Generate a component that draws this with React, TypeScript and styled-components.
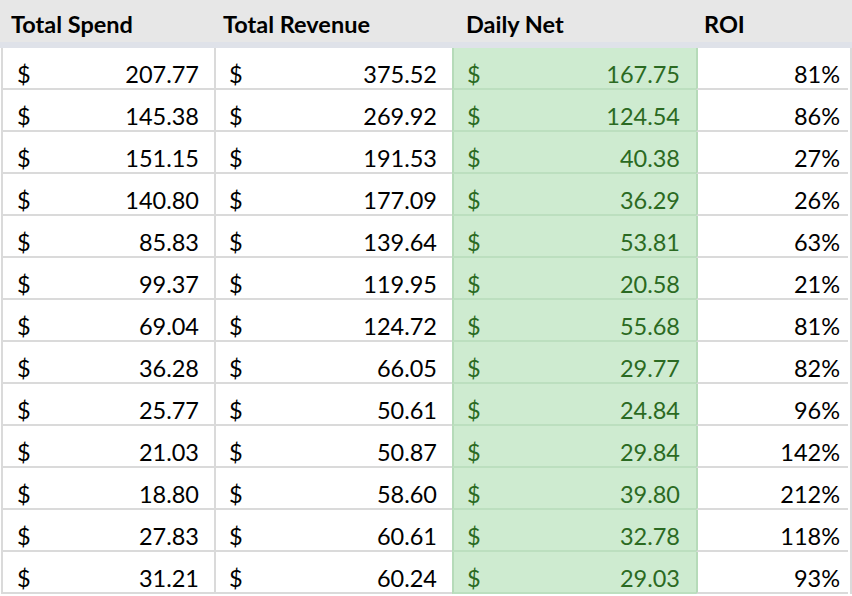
import * as React from 'react'
import styled, { createGlobalStyle } from 'styled-components'

const GlobalStyle = createGlobalStyle`
    html, body {
        margin: 0;
        padding: 0;
        background: #ffffff;
    }
    body {
        font-family: Lato, "Open Sans", "Liberation Sans", sans-serif;
        color: #000000;
        overflow: hidden;
    }
`

const COLS = '213px 238px 244px 152px'

const Sheet = styled.div`
    width: 852px;
    height: 596px;
    overflow: hidden;
    background: #ffffff;
`

const HeaderRow = styled.div`
    display: grid;
    grid-template-columns: ${COLS};
    height: 42px;
    padding-left: 1px;
    background: #e7e7e7;
    border-bottom: 6px solid #dfe2e9;
    box-sizing: content-box;
`

const HeaderCell = styled.div<{ $pad: number }>`
    padding-top: 10px;
    padding-left: ${p => p.$pad}px;
    font-size: 23.5px;
    line-height: 28px;
    font-weight: 700;
    white-space: nowrap;
`

const Body = styled.div`
    padding-left: 1px;
    width: 849px;
    border-right: 2px solid #dadada;
`

const Row = styled.div`
    display: grid;
    grid-template-columns: ${COLS};
`

const Cell = styled.div<{ $green?: boolean; $afterGreen?: boolean; $right?: number; $left?: number }>`
    display: flex;
    justify-content: ${p => (p.$left === undefined ? 'flex-end' : 'space-between')};
    height: 40px;
    box-sizing: border-box;
    padding-top: 12px;
    padding-left: ${p => p.$left ?? 0}px;
    padding-right: ${p => p.$right ?? 15}px;
    font-size: 23.5px;
    line-height: 28px;
    white-space: nowrap;
    background: ${p => (p.$green ? '#ceebd0' : '#ffffff')};
    color: ${p => (p.$green ? '#2b6a22' : '#000000')};
    border-left: 2px solid ${p => (p.$green || p.$afterGreen ? '#b6dbb9' : '#dadada')};
    border-bottom: 2px solid ${p => (p.$green ? '#bcdfbf' : '#dadada')};
    height: 42px;
`

const Dollar = styled.span``
const Amount = styled.span``

type Line = [string, string, string, string]

const rows: Line[] = [
    ['207.77', '375.52', '167.75', '81%'],
    ['145.38', '269.92', '124.54', '86%'],
    ['151.15', '191.53', '40.38', '27%'],
    ['140.80', '177.09', '36.29', '26%'],
    ['85.83', '139.64', '53.81', '63%'],
    ['99.37', '119.95', '20.58', '21%'],
    ['69.04', '124.72', '55.68', '81%'],
    ['36.28', '66.05', '29.77', '82%'],
    ['25.77', '50.61', '24.84', '96%'],
    ['21.03', '50.87', '29.84', '142%'],
    ['18.80', '58.60', '39.80', '212%'],
    ['27.83', '60.61', '32.78', '118%'],
    ['31.21', '60.24', '29.03', '93%'],
]

export default function App() {
    return (
        <Sheet>
            <GlobalStyle />
            <HeaderRow>
                <HeaderCell $pad={10}>Total Spend</HeaderCell>
                <HeaderCell $pad={9}>Total Revenue</HeaderCell>
                <HeaderCell $pad={14}>Daily Net</HeaderCell>
                <HeaderCell $pad={8}>ROI</HeaderCell>
            </HeaderRow>
            <Body>
                {rows.map((r, i) => (
                    <Row key={i}>
                        <Cell $left={14}>
                            <Dollar>$</Dollar>
                            <Amount>{r[0]}</Amount>
                        </Cell>
                        <Cell $left={13}>
                            <Dollar>$</Dollar>
                            <Amount>{r[1]}</Amount>
                        </Cell>
                        <Cell $green $left={13} $right={16}>
                            <Dollar>$</Dollar>
                            <Amount>{r[2]}</Amount>
                        </Cell>
                        <Cell $afterGreen $right={8}>
                            {r[3]}
                        </Cell>
                    </Row>
                ))}
            </Body>
        </Sheet>
    )
}
